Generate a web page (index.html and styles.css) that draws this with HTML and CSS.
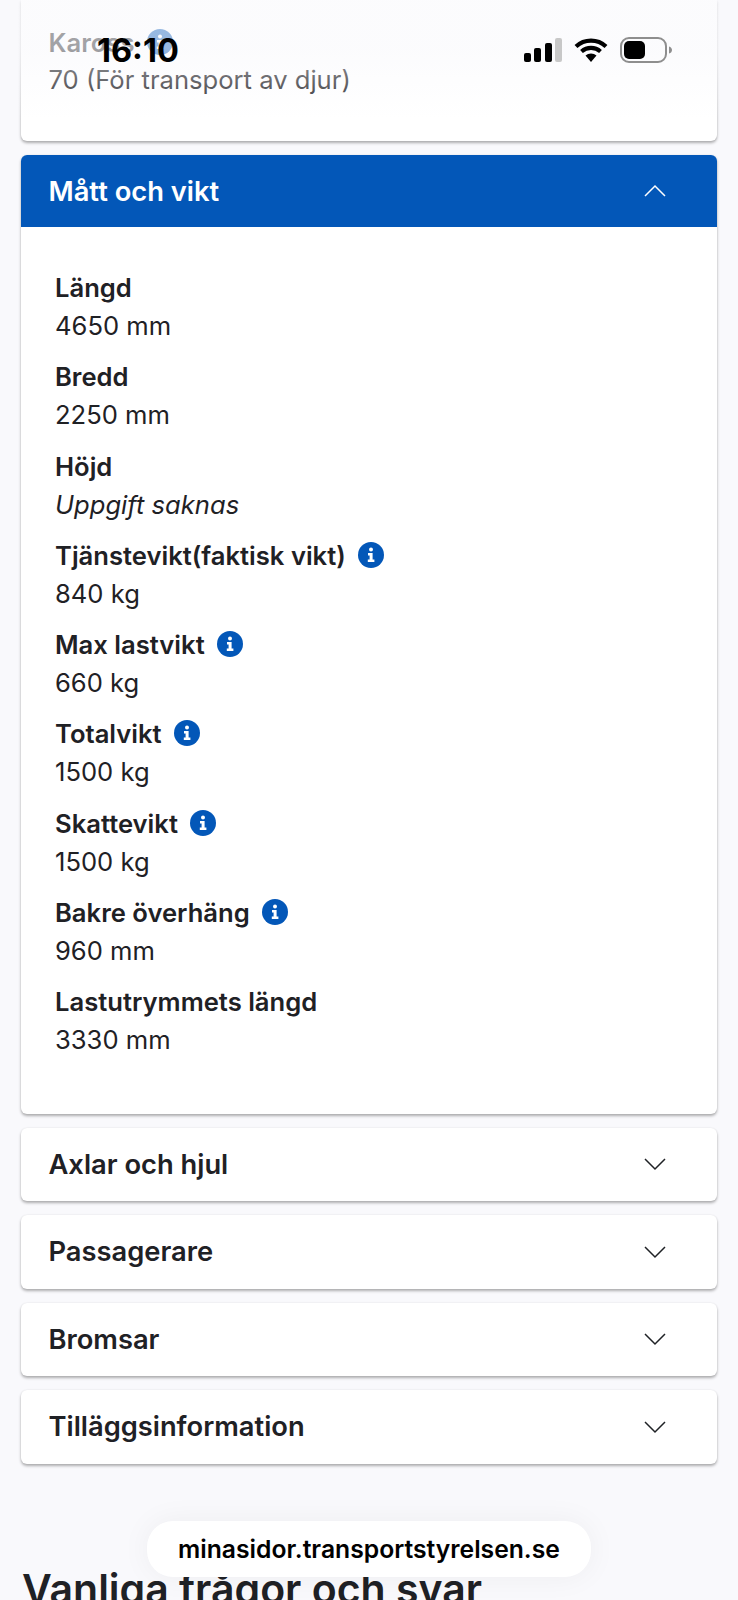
FILE: index.html
```html
<!DOCTYPE html>
<html lang="en">
<head>
    <meta charset="UTF-8">
    <meta name="viewport" content="width=device-width, initial-scale=1.0">
    <title>Fordonsuppgifter</title>
    <link rel="stylesheet" href="styles.css">
</head>
<body>
    <svg class="defs" width="0" height="0">
        <symbol id="info" viewBox="0 0 26 26">
            <circle cx="13" cy="13" r="13" fill="#0357b8"/>
            <circle cx="13" cy="7.6" r="2" fill="#fff"/>
            <path d="M10 11h4.6v6.6H16.4V20H9.8v-2.4h1.8v-4.2H10z" fill="#fff"/>
        </symbol>
        <symbol id="chevron" viewBox="0 0 24 14">
            <path d="M2 2l10 10L22 2" fill="none" stroke="currentColor" stroke-width="1.5"/>
        </symbol>
    </svg>

    <section class="card card-top">
        <div class="label-row">
            <span class="head-label">Kaross</span>
            <svg class="info"><use href="#info"/></svg>
        </div>
        <div class="top-value">70 (För transport av djur)</div>
    </section>

    <section class="card">
        <div class="acc-head open">
            <span>Mått och vikt</span>
            <svg class="chevron up"><use href="#chevron"/></svg>
        </div>
        <dl class="facts">
            <div class="fact"><dt>Längd</dt><dd>4650 mm</dd></div>
            <div class="fact"><dt>Bredd</dt><dd>2250 mm</dd></div>
            <div class="fact"><dt>Höjd</dt><dd class="missing">Uppgift saknas</dd></div>
            <div class="fact"><dt>Tjänstevikt(faktisk vikt) <svg class="info"><use href="#info"/></svg></dt><dd>840 kg</dd></div>
            <div class="fact"><dt>Max lastvikt <svg class="info"><use href="#info"/></svg></dt><dd>660 kg</dd></div>
            <div class="fact"><dt>Totalvikt <svg class="info"><use href="#info"/></svg></dt><dd>1500 kg</dd></div>
            <div class="fact"><dt>Skattevikt <svg class="info"><use href="#info"/></svg></dt><dd>1500 kg</dd></div>
            <div class="fact"><dt>Bakre överhäng <svg class="info"><use href="#info"/></svg></dt><dd>960 mm</dd></div>
            <div class="fact"><dt>Lastutrymmets längd</dt><dd>3330 mm</dd></div>
        </dl>
    </section>

    <section class="card acc-head"><span>Axlar och hjul</span><svg class="chevron"><use href="#chevron"/></svg></section>
    <section class="card acc-head"><span>Passagerare</span><svg class="chevron"><use href="#chevron"/></svg></section>
    <section class="card acc-head"><span>Bromsar</span><svg class="chevron"><use href="#chevron"/></svg></section>
    <section class="card acc-head"><span>Tilläggsinformation</span><svg class="chevron"><use href="#chevron"/></svg></section>

    <h2 class="faq-title">Vanliga frågor och svar</h2>

    <div class="status-bar">
        <span class="time">16:10</span>
        <div class="status-icons">
            <svg width="38" height="24" viewBox="0 0 38 24">
                <rect x="0" y="15" width="7" height="9" rx="2" fill="#000"/>
                <rect x="10" y="10" width="7" height="14" rx="2" fill="#000"/>
                <rect x="21" y="5" width="7" height="19" rx="2" fill="#000"/>
                <rect x="31" y="0" width="7" height="24" rx="2" fill="#c8c8c8"/>
            </svg>
            <svg width="34" height="24" viewBox="0 0 34 24">
                <path d="M2 8.500a22 22 0 0 1 30 0M7.500 13.500a14.500 14.500 0 0 1 19 0" fill="none" stroke="#000" stroke-width="4.200"/>
                <path d="M11.500 17.500a8.500 8.500 0 0 1 11 0L17 24z" fill="#000"/>
            </svg>
            <svg width="52" height="26" viewBox="0 0 52 26">
                <rect x="1" y="1" width="45" height="24" rx="8" fill="none" stroke="#8e8e8e" stroke-width="2"/>
                <rect x="4" y="4" width="21" height="18" rx="5" fill="#000"/>
                <path d="M49 9.500c2 .5 3 2 3 3.500s-1 3-3 3.500z" fill="#8e8e8e"/>
            </svg>
        </div>
    </div>

    <div class="url-pill">minasidor.transportstyrelsen.se</div>
</body>
</html>
```

FILE: styles.css
```css
html, body {
    height: 1600px;
    overflow: hidden;
}
body {
    margin: 0;
    padding: 0 21px;
    position: relative;
    background: #f9f9fc;
    color: #1f2125;
    font-family: Inter, sans-serif;
}
.defs {
    position: absolute;
}
.card {
    background: #fff;
    border-radius: 6px;
    margin-bottom: 14px;
    box-shadow: 0 2px 3px rgba(0, 0, 0, 0.3), 0 0 2px rgba(0, 0, 0, 0.08);
    overflow: hidden;
}
.card-top {
    height: 141px;
    padding: 27px 27.5px 0;
    box-sizing: border-box;
    border-radius: 0 0 6px 6px;
}
.label-row {
    display: flex;
    align-items: center;
    gap: 12px;
    height: 30px;
}
.head-label {
    font-size: 25.6px;
    font-weight: 600;
}
.top-value {
    margin-top: 8px;
    font-size: 25.6px;
    line-height: 30px;
}
.info {
    width: 26px;
    height: 26px;
    vertical-align: -3px;
    margin-left: 6px;
    flex: none;
}
.label-row .info {
    margin-left: 0;
}
.acc-head {
    display: flex;
    justify-content: space-between;
    align-items: center;
    height: 73.5px;
    padding: 0 50px 0 27.5px;
    font-size: 27.3px;
    font-weight: 600;
}
.acc-head.open {
    background: #0357b8;
    color: #fff;
    height: 72px;
}
.chevron {
    width: 24px;
    height: 14px;
}
.chevron.up {
    transform: rotate(180deg);
}
.facts {
    margin: 0;
    padding: 42px 34px 41px;
}
.fact {
    height: 89.3px;
}
.fact dt {
    font-size: 25.6px;
    line-height: 38px;
    font-weight: 600;
}
.fact dd {
    margin: 0;
    font-size: 25.6px;
    line-height: 38px;
}
.missing {
    font-style: italic;
}
.faq-title {
    margin: 101px 0 0 1px;
    font-size: 41px;
    font-weight: 600;
    line-height: 48px;
    white-space: nowrap;
}
.status-bar {
    position: absolute;
    top: 0;
    left: 0;
    right: 0;
    height: 120px;
    background: linear-gradient(rgba(249, 249, 252, 0.6) 40%, rgba(249, 249, 252, 0.3) 70%, rgba(249, 249, 252, 0));
}
.time {
    position: absolute;
    left: 97px;
    top: 32px;
    font-size: 32.5px;
    line-height: 38px;
    font-weight: 700;
    color: #000;
}
.status-icons {
    position: absolute;
    right: 66px;
    top: 37px;
    display: flex;
    align-items: center;
    gap: 12px;
}
.url-pill {
    position: absolute;
    left: 147px;
    top: 1521px;
    width: 444px;
    height: 56px;
    border-radius: 26px;
    background: #fff;
    box-shadow: 0 0 30px rgba(0, 0, 0, 0.05);
    display: flex;
    align-items: center;
    justify-content: center;
    font-size: 24.7px;
    font-weight: 600;
    color: #000;
}
```
